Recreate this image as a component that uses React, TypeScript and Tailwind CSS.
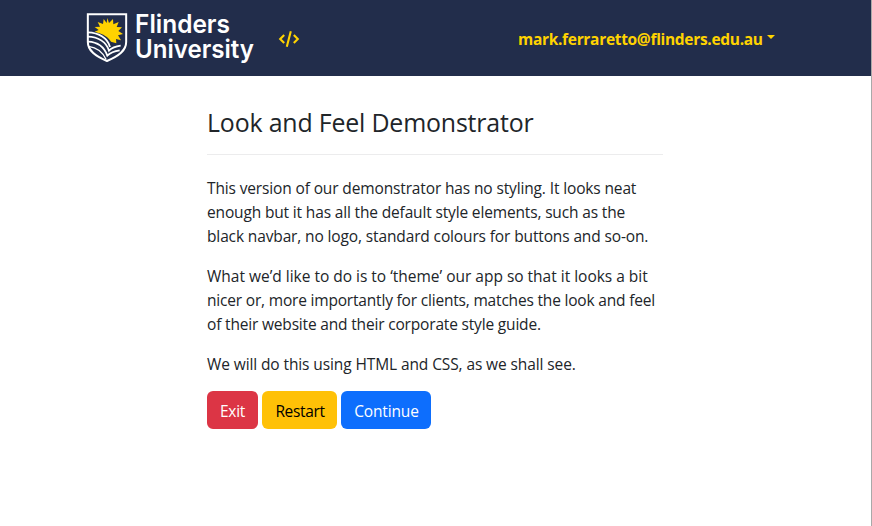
import React from 'react';

function Shield() {
  return (
    <svg width="56" height="62" viewBox="0 0 168 186" fill="none" aria-hidden="true">
      <path
        fill="#FFD300"
        d="M82 36 L87 51 L99 39 L100 55 L116 48 L110 63 L126 64 L115 75 L129 84 L114 88 L123 103 L108 99 L109 112 L93 107 C85 93 68 83 53 80 L44 77 L56 72 L44 63 L60 62 L53 48 L69 54 L71 39 L80 51 Z"
      />
      <g stroke="#fff" strokeWidth="5.500">
        <path strokeWidth="6" d="M23.500 24.500 H138.500 V108 C138.500 134 117 150 81 165 C45 150 23.500 134 23.500 108 Z" />
        <path d="M24 79 C54 80 83 94 90 123" />
        <path d="M24 92 C52 93 78 106 87 134 C96 125 107 121 122 119" />
        <path d="M24 107 C50 108 72 121 82 149 C92 139 104 135 119 133" />
        <path strokeWidth="4" d="M26 121 C48 124 67 136 78 160" />
      </g>
    </svg>
  );
}

function Brand() {
  return (
    <a href="#" className="flex h-[62px] w-[180px] items-start" aria-label="Flinders University">
      <Shield />
      <span className="-ml-0.5 flex flex-col">
        <svg width="122" height="29" className="overflow-visible">
          <text x="1" y="27" fill="#fff" textLength="95" lengthAdjust="spacingAndGlyphs" className="font-['Inter',sans-serif] text-[25px] font-semibold">Flinders</text>
        </svg>
        <svg width="122" height="32" className="overflow-visible">
          <text x="1" y="22.500" fill="#fff" textLength="119" lengthAdjust="spacingAndGlyphs" className="font-['Inter',sans-serif] text-[25px] font-semibold">University</text>
        </svg>
      </span>
    </a>
  );
}

function CodeIcon() {
  return (
    <svg width="22" height="18" viewBox="0 0 22 18" fill="none" stroke="#FFD300" strokeWidth="2.100" aria-hidden="true">
      <path d="M6.200 5 L2.200 9 L6.200 13 M15.800 5 L19.800 9 L15.800 13 M12.800 1.300 L8.800 16.700" />
    </svg>
  );
}

export default function App() {
  return (
    <div className="h-[526px] w-[872px] border-r border-[#a9a9a9] bg-white font-['Open_Sans','Noto_Sans',sans-serif] text-[15.500px] leading-6 text-[#212529]">
      <nav className="flex h-[76px] items-start bg-[#222D4B] pl-20 pt-1.5">
        <Brand />
        <a href="#" className="ml-[18px] mt-6" aria-label="Code">
          <CodeIcon />
        </a>
        <a href="#" className="ml-[218px] mt-[21px] flex items-center whitespace-nowrap font-bold text-[#FFD300]">
          <span className="w-[245px] tracking-[-0.310px]">mark.ferraretto@flinders.edu.au</span>
          <span className="mb-1 ml-1 border-x-4 border-t-4 border-x-transparent border-t-[#FFD300]" />
        </a>
      </nav>
      <main className="ml-[207px] w-[456px] whitespace-nowrap pt-[31px]">
        <h1 className="text-[24.900px] leading-[31px] tracking-[-0.170px]">Look and Feel Demonstrator</h1>
        <hr className="mb-[21px] mt-[16px] border-[#ececed]" />
        <p className="mb-4">
          <span className="block tracking-[-0.137px]">This version of our demonstrator has no styling. It looks neat</span>
          <span className="block tracking-[-0.155px]">enough but it has all the default style elements, such as the</span>
          <span className="block tracking-[-0.131px]">black navbar, no logo, standard colours for buttons and so-on.</span>
        </p>
        <p className="mb-4">
          <span className="block tracking-[-0.010px]">What we’d like to do is to ‘theme’ our app so that it looks a bit</span>
          <span className="block tracking-[-0.187px]">nicer or, more importantly for clients, matches the look and feel</span>
          <span className="block tracking-[-0.176px]">of their website and their corporate style guide.</span>
        </p>
        <p className="mb-[15px] tracking-[-0.106px]">We will do this using HTML and CSS, as we shall see.</p>
        <div className="flex gap-1">
          <button className="h-[38px] w-[51px] rounded-md bg-[#dc3545] pt-0.5 tracking-[-0.300px] text-white">Exit</button>
          <button className="h-[38px] w-[75px] rounded-md bg-[#ffc107] pl-px pt-0.5 tracking-[-0.350px] text-black">Restart</button>
          <button className="h-[38px] w-[90px] rounded-md bg-[#0d6efd] pl-px pt-0.5 tracking-[-0.150px] text-white">Continue</button>
        </div>
      </main>
    </div>
  );
}
